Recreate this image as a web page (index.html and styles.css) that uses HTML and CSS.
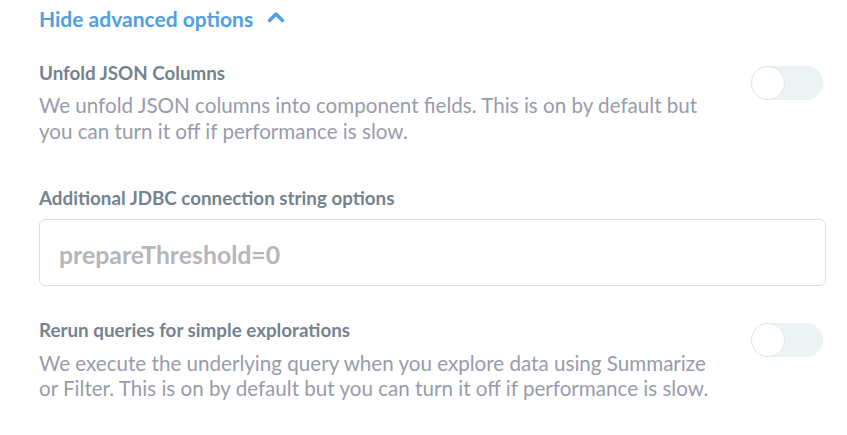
FILE: index.html
```html
<!DOCTYPE html>
<html>
<head>
<meta charset="utf-8">
<link rel="stylesheet" href="styles.css">
</head>
<body>
<div class="page">
  <div class="toggle-link">
    <span>Hide advanced options</span>
    <svg class="chev" width="18" height="12" viewBox="0 0 18 12"><path d="M2.5 9.5 L9 3 L15.5 9.5" fill="none" stroke="#509ee3" stroke-width="3.4" stroke-linecap="round" stroke-linejoin="round"/></svg>
  </div>

  <div class="field first row">
    <div class="text">
      <div class="label">Unfold JSON Columns</div>
      <div class="desc">We unfold JSON columns into component fields. This is on by default but you can turn it off if performance is slow.</div>
    </div>
    <div class="switch"><div class="knob"></div></div>
  </div>

  <div class="field second">
    <div class="label">Additional JDBC connection string options</div>
    <div class="input">prepareThreshold=0</div>
  </div>

  <div class="field third row">
    <div class="text">
      <div class="label">Rerun queries for simple explorations</div>
      <div class="desc tight">We execute the underlying query when you explore data using Summarize or Filter. This is on by default but you can turn it off if performance is slow.</div>
    </div>
    <div class="switch"><div class="knob"></div></div>
  </div>
</div>
</body>
</html>
```

FILE: styles.css
```css
html, body {
  margin: 0;
  padding: 0;
  background: #fff;
}
body {
  font-family: Lato, "Open Sans", sans-serif;
}
.page {
  padding: 4px 21px 0 39px;
}
.toggle-link {
  display: flex;
  align-items: center;
  gap: 14px;
  color: #509ee3;
  font-weight: 700;
  font-size: 21px;
  height: 28px;
}
.chev {
  margin-top: -3px;
}
.field.first {
  margin-top: 31px;
}
.field.second {
  margin-top: 44px;
}
.field.third {
  margin-top: 34px;
}
.row {
  display: flex;
  justify-content: space-between;
  align-items: flex-start;
}
.text {
  width: 680px;
}
.label {
  color: #74838f;
  font-weight: 700;
  font-size: 18.8px;
  line-height: 20px;
}
.desc {
  margin-top: 9px;
  color: #979cab;
  font-size: 20.6px;
  line-height: 26px;
}
.desc.tight {
  margin-top: 11px;
  line-height: 25px;
}
.switch {
  margin-top: 3px;
  margin-right: 3px;
  width: 72px;
  height: 34px;
  border-radius: 17px;
  background: #edf2f5;
  position: relative;
  flex: none;
}
.knob {
  position: absolute;
  left: 0;
  top: 0;
  width: 32px;
  height: 32px;
  border-radius: 50%;
  background: #fff;
  border: 1px solid #e2e6e9;
}
.input {
  margin-top: 11px;
  height: 67px;
  box-sizing: border-box;
  border: 1px solid #dcdfe2;
  border-radius: 6px;
  display: flex;
  align-items: center;
  padding: 3px 0 0 19px;
  color: #b4b6ba;
  font-weight: 700;
  font-size: 24.8px;
}
```
